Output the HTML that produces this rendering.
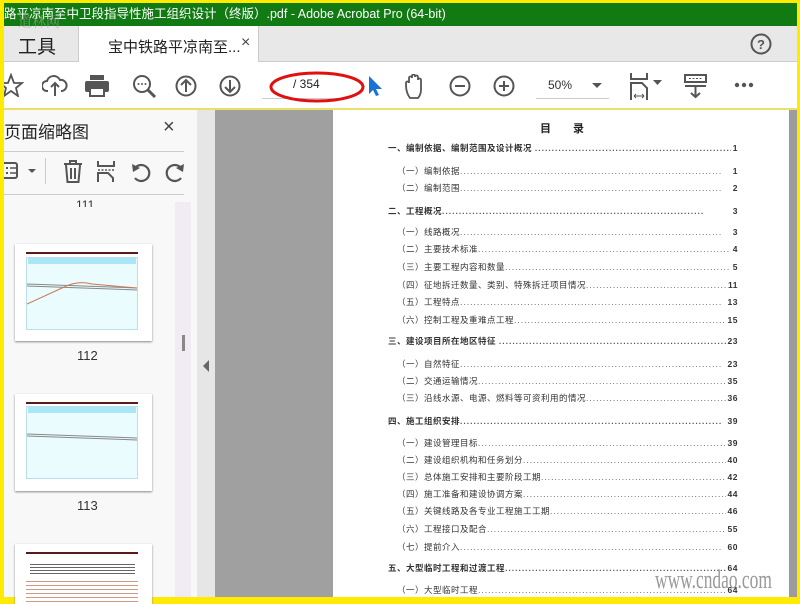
<!DOCTYPE html>
<html><head><meta charset="utf-8"><style>
*{margin:0;padding:0;box-sizing:border-box}
body{width:800px;height:600px;overflow:hidden;background:#ffea00;position:relative;font-family:"Liberation Sans","Noto Sans CJK SC",sans-serif}
.abs{position:absolute}
#title{left:4px;top:3px;width:793px;height:23px;background:#117a12;color:#fff;font-size:12.5px;line-height:22px;white-space:nowrap;overflow:hidden}
#tabs{left:4px;top:26px;width:793px;height:36px;background:#e8e8e8;border-bottom:1px solid #ccc}
#tool{left:4px;top:62px;width:793px;height:47px;background:#fff;border-bottom:1px solid #d4d4d4}
#left{left:4px;top:110px;width:193px;height:487px;background:#f8f8f8}
#strip{left:197px;top:110px;width:18px;height:487px;background:#e6e6e6}
#gray{left:215px;top:110px;width:118px;height:487px;background:#a0a0a0}
#page{left:333px;top:110px;width:456px;height:487px;background:#fff}
#sb{left:789px;top:110px;width:8px;height:487px;background:#9c9c9c}
.toc{position:absolute;left:0;width:400px;font-size:8.5px;color:#333;white-space:nowrap;overflow:hidden;line-height:11px;letter-spacing:0.5px}
.toc span.d{color:#555;letter-spacing:1px}
.toc b.n{position:absolute;right:0;background:#fff;padding-left:2px;font-weight:bold}
svg{position:absolute}
.thumb{position:absolute;left:11px;width:137px;height:97px;background:#fff;box-shadow:0 1px 2px #888}
.num{position:absolute;left:73px;font-size:13px;color:#333}
</style></head><body>
<div id="title" class="abs">路平凉南至中卫段指导性施工组织设计（终版）.pdf - Adobe Acrobat Pro (64-bit)</div>
<div id="tabs" class="abs">
 <div class="abs" style="left:14px;top:6px;font-size:19px;color:#222">工具</div>
 <div class="abs" style="left:74px;top:0;width:181px;height:36px;background:#fff;border-left:1px solid #ccc;border-right:1px solid #ccc"></div>
 <div class="abs" style="left:104px;top:10px;font-size:15px;color:#222">宝中铁路平凉南至...</div>
 <div class="abs" style="left:237px;top:8px;font-size:16px;color:#444">×</div>
 <svg style="left:746px;top:7px" width="22" height="22"><circle cx="11" cy="11" r="9.5" fill="none" stroke="#555" stroke-width="2"/><text x="11" y="16" font-size="13" font-weight="bold" text-anchor="middle" fill="#555" font-family="Liberation Sans">?</text></svg>
</div>
<div id="tool" class="abs">
 <svg style="left:0;top:11px" width="20" height="24"><polygon points="7,2 10,10 18,10 12,15 14,23 7,18 0,23 2,15 -4,10 4,10" fill="none" stroke="#555" stroke-width="1.8"/></svg>
 <svg style="left:38px;top:12px" width="26" height="24"><path d="M6 17 H5 a5 5 0 0 1 0-10 a7 7 0 0 1 13-1 a5 5 0 0 1 2 11 h-1 M13 22 V9 M9 13 l4-4 4 4" fill="none" stroke="#555" stroke-width="2"/></svg>
 <svg style="left:81px;top:13px" width="24" height="22"><rect x="5" y="0" width="14" height="5" fill="#555"/><rect x="0" y="6" width="24" height="11" rx="2" fill="#555"/><rect x="5" y="13" width="14" height="8" fill="#fff" stroke="#555" stroke-width="2"/></svg>
 <svg style="left:128px;top:12px" width="26" height="26"><circle cx="10" cy="10" r="8" fill="none" stroke="#555" stroke-width="2"/><path d="M16 16 L23 23" stroke="#555" stroke-width="3"/><circle cx="6.5" cy="10" r="1" fill="#555"/><circle cx="10" cy="10" r="1" fill="#555"/><circle cx="13.5" cy="10" r="1" fill="#555"/></svg>
 <svg style="left:171px;top:13px" width="22" height="22"><circle cx="11" cy="11" r="9.5" fill="none" stroke="#555" stroke-width="2"/><path d="M11 17V5 M6 10l5-5 5 5" fill="none" stroke="#555" stroke-width="2"/></svg>
 <svg style="left:215px;top:13px" width="22" height="22"><circle cx="11" cy="11" r="9.5" fill="none" stroke="#555" stroke-width="2"/><path d="M11 5v12 M6 12l5 5 5-5" fill="none" stroke="#555" stroke-width="2"/></svg>
 <div class="abs" style="left:258px;top:36px;width:80px;height:1px;background:#ccc"></div>
 <div class="abs" style="left:289px;top:15px;font-size:12px;color:#222">/ 354</div>
 <svg style="left:264px;top:7px" width="98" height="36"><ellipse cx="49" cy="18" rx="46" ry="14" fill="none" stroke="#e01010" stroke-width="3"/></svg>
 <svg style="left:363px;top:13px" width="16" height="22"><polygon points="2,1 2,19 6,15 9,21 12,20 9,14 15,14" fill="#1a73d4"/></svg>
 <svg style="left:400px;top:12px" width="24" height="26"><path d="M6 24 C3 20 2 15 2 11 V9 a1.5 1.5 0 0 1 3 0 V4 a1.5 1.5 0 0 1 3 0 V2 a1.5 1.5 0 0 1 3 0 V3 a1.5 1.5 0 0 1 3 0 V6 a1.5 1.5 0 0 1 3 0 V16 C17 20 15 23 14 24 Z" fill="none" stroke="#555" stroke-width="1.8"/></svg>
 <svg style="left:445px;top:13px" width="22" height="22"><circle cx="11" cy="11" r="9.5" fill="none" stroke="#555" stroke-width="2"/><path d="M6 11h10" stroke="#555" stroke-width="2"/></svg>
 <svg style="left:489px;top:13px" width="22" height="22"><circle cx="11" cy="11" r="9.5" fill="none" stroke="#555" stroke-width="2"/><path d="M6 11h10 M11 6v10" stroke="#555" stroke-width="2"/></svg>
 <div class="abs" style="left:544px;top:16px;font-size:12px;color:#333">50%</div>
 <svg style="left:588px;top:21px" width="10" height="6"><polygon points="0,0 10,0 5,5" fill="#555"/></svg>
 <div class="abs" style="left:532px;top:36px;width:73px;height:1px;background:#ccc"></div>
 <svg style="left:625px;top:11px" width="36" height="28"><path d="M2 0v6h16V0 M2 27V10h11l5 5v12" fill="none" stroke="#555" stroke-width="2"/><path d="M5 23h10 M5 23l2-2 M5 23l2 2 M15 23l-2-2 M15 23l-2 2" stroke="#555" stroke-width="1"/><polygon points="24,7 33,7 28.5,12" fill="#555"/></svg>
 <svg style="left:680px;top:12px" width="24" height="26"><rect x="1" y="1" width="21" height="7" fill="#fff" stroke="#555" stroke-width="2"/><path d="M5 4.5h13" stroke="#555" stroke-dasharray="2 1.5"/><path d="M1 12h21 M11.5 12v11 M7 19l4.5 4 4.5-4" fill="none" stroke="#555" stroke-width="2"/></svg>
 <svg style="left:730px;top:20px" width="20" height="6"><circle cx="3" cy="3" r="2.2" fill="#555"/><circle cx="10" cy="3" r="2.2" fill="#555"/><circle cx="17" cy="3" r="2.2" fill="#555"/></svg>
</div>
<div id="left" class="abs">
 <div class="abs" style="left:0;top:8px;font-size:17px;color:#222">页面缩略图</div>
 <div class="abs" style="left:159px;top:6px;font-size:20px;color:#444">×</div>
 <div class="abs" style="left:0;top:41px;width:180px;height:1px;background:#ccc"></div>
 <svg style="left:0;top:51px" width="40" height="20"><rect x="-4" y="2" width="17" height="15" rx="2" fill="none" stroke="#555" stroke-width="2"/><rect x="2" y="6" width="2" height="2" fill="#555"/><rect x="2" y="11" width="2" height="2" fill="#555"/><path d="M6 7h6 M6 12h6" stroke="#555" stroke-width="1.5"/><polygon points="24,8 32,8 28,12" fill="#555"/></svg>
 <div class="abs" style="left:41px;top:48px;width:1px;height:26px;background:#ccc"></div>
 <svg style="left:59px;top:50px" width="22" height="24"><path d="M1 4h18 M7 4V1h6v3 M3 5l1.5 17h11L17 5 M8 8v11 M12 8v11" fill="none" stroke="#555" stroke-width="2"/></svg>
 <svg style="left:92px;top:51px" width="22" height="22"><path d="M2 0v5h16V0 M2 21V12h10l5 5v4" fill="none" stroke="#555" stroke-width="2"/><path d="M2 9h16" stroke="#555" stroke-dasharray="2 1.5" stroke-width="1.5"/></svg>
 <svg style="left:126px;top:51px" width="22" height="22"><path d="M6 6 A8 8 0 1 1 5 17" fill="none" stroke="#555" stroke-width="2.2"/><polygon points="2,3 10,7 3,11" fill="#555"/></svg>
 <svg style="left:160px;top:51px" width="22" height="22"><path d="M16 6 A8 8 0 1 0 17 17" fill="none" stroke="#555" stroke-width="2.2"/><polygon points="20,3 12,7 19,11" fill="#555"/></svg>
 <div class="abs" style="left:0;top:84px;width:180px;height:1px;background:#ccc"></div>
 <div class="abs" style="left:171px;top:92px;width:16px;height:395px;background:#f1ecf3"></div>
 <div class="abs" style="left:178px;top:225px;width:3px;height:16px;background:#888"></div>
 <div class="abs" style="left:72px;top:88px;font-size:12px;color:#333;height:9px;overflow:hidden">111</div>
 <div class="thumb" style="top:134px"><div class="abs" style="left:11px;top:8px;width:112px;height:2px;background:#5a1a1a"></div><div class="abs" style="left:11px;top:13px;width:112px;height:73px;background:#eafcfd;border:1px solid #bde"></div><div class="abs" style="left:13px;top:14px;width:108px;height:6px;background:#a9e6f6"></div><svg style="left:12px;top:26px" width="110" height="40"><path d="M0 14 L110 18 M0 16 L110 20" stroke="#888" stroke-width="1"/><path d="M0 34 L35 18 Q50 10 65 14 L110 18" stroke="#c75" fill="none"/></svg></div>
 <div class="num" style="top:238px">112</div>
 <div class="thumb" style="top:284px"><div class="abs" style="left:11px;top:8px;width:112px;height:2px;background:#5a1a1a"></div><div class="abs" style="left:11px;top:12px;width:112px;height:73px;background:#eafcfd;border:1px solid #bde"></div><div class="abs" style="left:13px;top:13px;width:108px;height:6px;background:#a9e6f6"></div><svg style="left:12px;top:30px" width="110" height="20"><path d="M0 10 L110 14 M0 12 L110 16" stroke="#888"/></svg></div>
 <div class="num" style="top:388px">113</div>
 <div class="thumb" style="top:434px;height:60px"><div class="abs" style="left:11px;top:8px;width:112px;height:2px;background:#5a1a1a"></div><div class="abs" style="left:15px;top:18px;width:105px;height:12px;background:repeating-linear-gradient(#fff 0,#fff 2px,#666 2px,#666 3px)"></div><div class="abs" style="left:11px;top:34px;width:112px;height:26px;background:repeating-linear-gradient(#fff 0,#fff 3px,#c98 3px,#c98 4px)"></div></div>
</div>
<div id="strip" class="abs"><svg style="left:6px;top:250px" width="6" height="12"><polygon points="6,0 6,12 0,6" fill="#666"/></svg></div>
<div id="gray" class="abs"></div>
<div id="page" class="abs">
 <div class="abs" style="left:207px;top:10px;font-size:11px;font-weight:bold;color:#222;letter-spacing:22px">目录</div>
 <div class="abs" style="left:55px;top:0;width:350px;height:487px">
  <div class="toc" style="top:33px;width:350px;font-weight:bold">一、编制依据、编制范围及设计概况 <span class="d">....................................................................</span><b class="n">1</b></div>
  <div class="toc" style="top:56px;left:9px;width:341px">（一）编制依据<span class="d">..............................................................................</span><b class="n">1</b></div>
  <div class="toc" style="top:73px;left:9px;width:341px">（二）编制范围<span class="d">..............................................................................</span><b class="n">2</b></div>
  <div class="toc" style="top:96px;width:350px;font-weight:bold">二、工程概况<span class="d">..............................................................................</span><b class="n">3</b></div>
  <div class="toc" style="top:117px;left:9px;width:341px">（一）线路概况<span class="d">..............................................................................</span><b class="n">3</b></div>
  <div class="toc" style="top:134px;left:9px;width:341px">（二）主要技术标准<span class="d">..............................................................................</span><b class="n">4</b></div>
  <div class="toc" style="top:152px;left:9px;width:341px">（三）主要工程内容和数量<span class="d">..............................................................................</span><b class="n">5</b></div>
  <div class="toc" style="top:170px;left:9px;width:341px">（四）征地拆迁数量、类别、特殊拆迁项目情况<span class="d">..............................................................................</span><b class="n">11</b></div>
  <div class="toc" style="top:187px;left:9px;width:341px">（五）工程特点<span class="d">..............................................................................</span><b class="n">13</b></div>
  <div class="toc" style="top:205px;left:9px;width:341px">（六）控制工程及重难点工程<span class="d">..............................................................................</span><b class="n">15</b></div>
  <div class="toc" style="top:226px;width:350px;font-weight:bold">三、建设项目所在地区特征 <span class="d">..............................................................................</span><b class="n">23</b></div>
  <div class="toc" style="top:249px;left:9px;width:341px">（一）自然特征<span class="d">..............................................................................</span><b class="n">23</b></div>
  <div class="toc" style="top:266px;left:9px;width:341px">（二）交通运输情况<span class="d">..............................................................................</span><b class="n">35</b></div>
  <div class="toc" style="top:283px;left:9px;width:341px">（三）沿线水源、电源、燃料等可资利用的情况<span class="d">..............................................................................</span><b class="n">36</b></div>
  <div class="toc" style="top:306px;width:350px;font-weight:bold">四、施工组织安排<span class="d">..............................................................................</span><b class="n">39</b></div>
  <div class="toc" style="top:328px;left:9px;width:341px">（一）建设管理目标<span class="d">..............................................................................</span><b class="n">39</b></div>
  <div class="toc" style="top:345px;left:9px;width:341px">（二）建设组织机构和任务划分<span class="d">..............................................................................</span><b class="n">40</b></div>
  <div class="toc" style="top:362px;left:9px;width:341px">（三）总体施工安排和主要阶段工期<span class="d">..............................................................................</span><b class="n">42</b></div>
  <div class="toc" style="top:379px;left:9px;width:341px">（四）施工准备和建设协调方案<span class="d">..............................................................................</span><b class="n">44</b></div>
  <div class="toc" style="top:396px;left:9px;width:341px">（五）关键线路及各专业工程施工工期<span class="d">..............................................................................</span><b class="n">46</b></div>
  <div class="toc" style="top:414px;left:9px;width:341px">（六）工程接口及配合<span class="d">..............................................................................</span><b class="n">55</b></div>
  <div class="toc" style="top:432px;left:9px;width:341px">（七）提前介入<span class="d">..............................................................................</span><b class="n">60</b></div>
  <div class="toc" style="top:453px;width:350px;font-weight:bold">五、大型临时工程和过渡工程<span class="d">..............................................................................</span><b class="n">64</b></div>
  <div class="toc" style="top:475px;left:9px;width:341px">（一）大型临时工程<span class="d">..............................................................................</span><b class="n">64</b></div>
 </div>
 <div class="abs" style="left:322px;top:455px;font-size:26px;color:#999;font-family:'Liberation Serif',serif;transform:scaleX(0.67);transform-origin:left">www.cndao.com</div>
</div>
<div id="sb" class="abs"></div>
<div class="abs" style="left:18px;top:12px;font-size:14px;color:#aaa;opacity:.6;font-family:'Noto Serif CJK SC',serif">道林网</div>
</body></html>
